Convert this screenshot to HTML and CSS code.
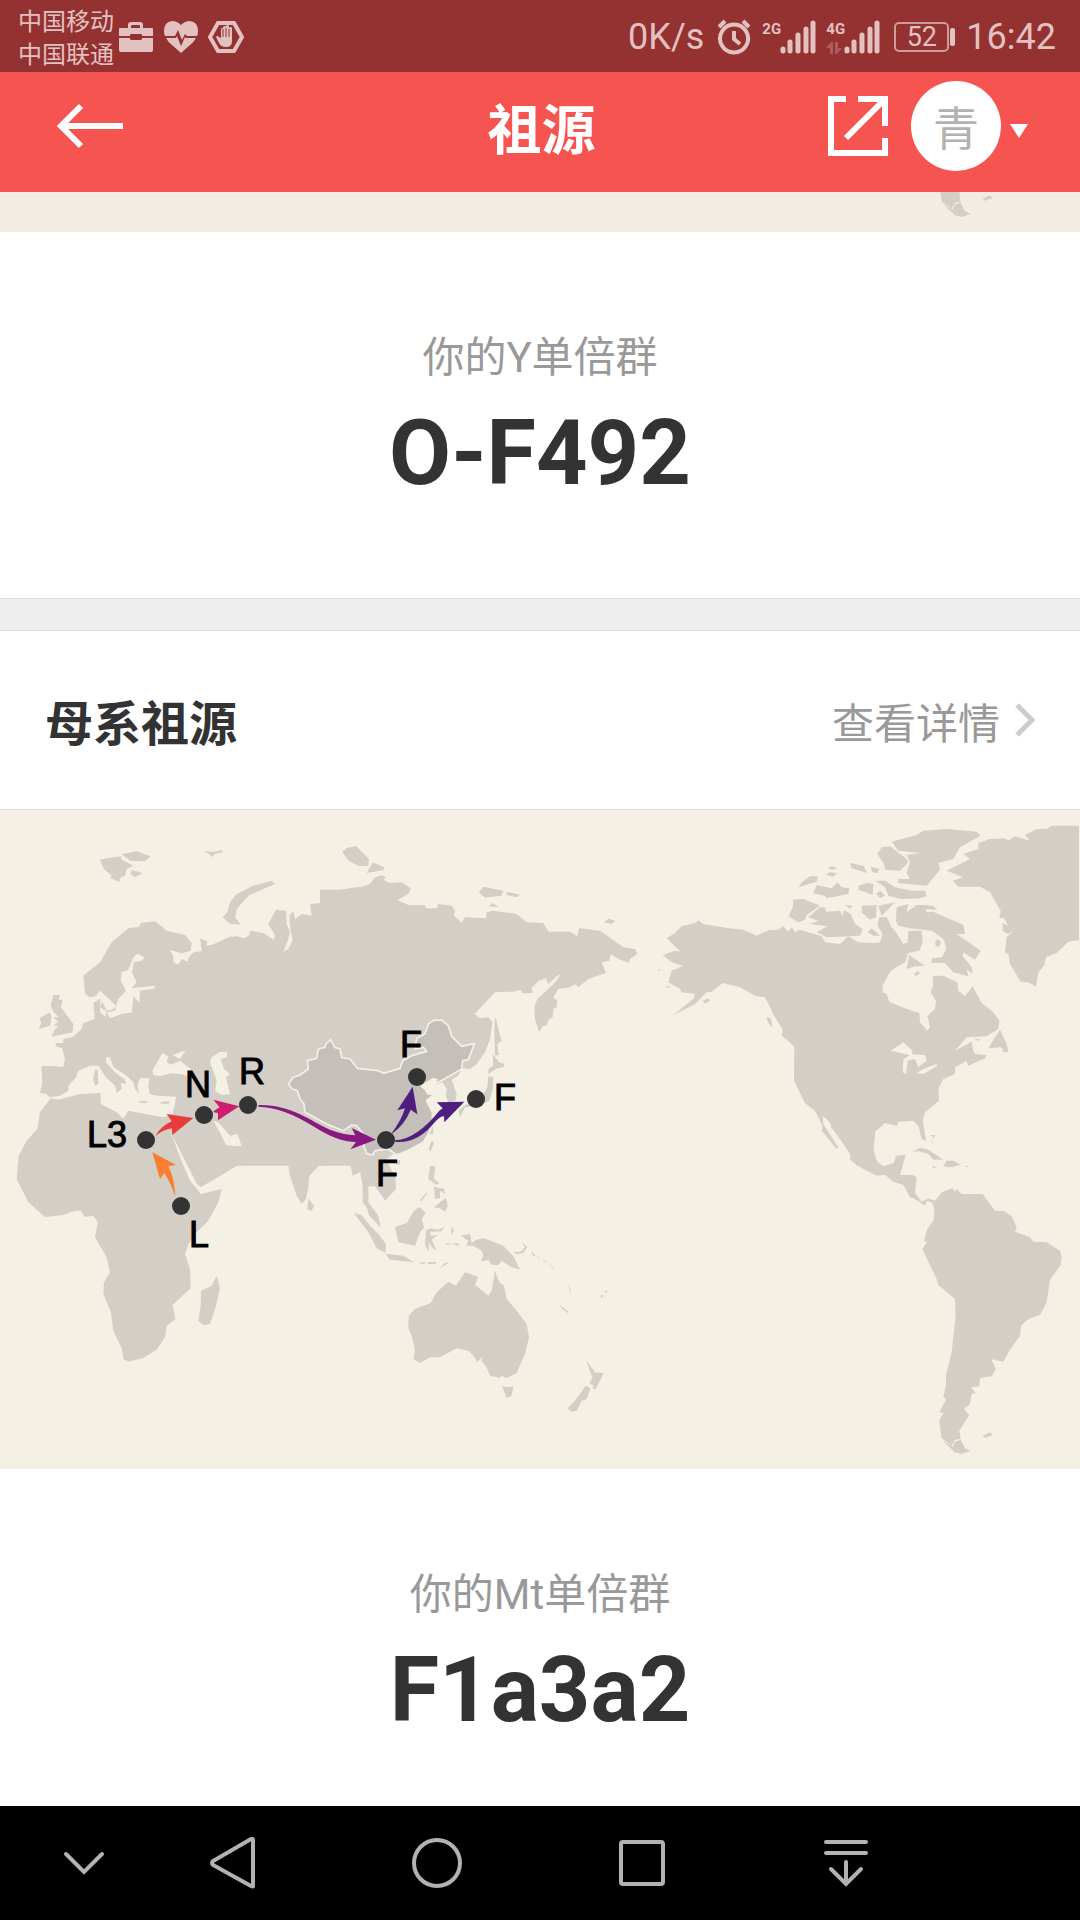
FILE: index.html
```html
<!DOCTYPE html>
<html lang="zh-CN">
<head>
  <meta charset="UTF-8" />
  <meta name="viewport" content="width=device-width, initial-scale=1.0">
  <title>祖源</title>
  <link rel="stylesheet" href="styles.css">
</head>
<body>

  <!-- Status bar -->
  <div class="status-bar">
    <div class="carriers">
      <div>中国移动</div>
      <div>中国联通</div>
    </div>
    <div class="status-icons">
      <svg width="36" height="34" viewBox="0 0 36 34">
        <path d="M10 7V4q0-3 3-3h9q3 0 3 3v3h9q1 0 1 1v7H24v-1q0-1-1-1H13q-1 0-1 1v1H1V8q0-1 1-1zm3 0h9V5q0-1-1-1h-7q-1 0-1 1z" fill-rule="evenodd"/>
        <path d="M1 17h11q0 2 1 2h10q1 0 1-2h11v12q0 2-2 2H3q-2 0-2-2z"/>
      </svg>
      <svg width="36" height="34" viewBox="0 0 36 34">
        <path d="M18 4Q14 0 9 0 1 1 1 10q0 3 1 5h10l3-6 4 10 3-6 2 2h10q1-2 1-5 0-9-8-10-5 0-9 4z"/>
        <path d="M3 17q2 4 6 7l9 8 9-8q4-3 6-7H23l-1-1-4 9-4-10-1 2z"/>
      </svg>
      <svg width="36" height="34" viewBox="0 0 36 34">
        <path d="M10 2h16l8 14-8 14H10L2 16z" class="line"/>
        <path d="M13 17V8q1-2 2 0V6q2-2 3 0V5q2-2 3 0v2q2-2 3 0v13q0 6-6 6-5 0-7-4l-3-6q1-2 3 0z"/>
        <path d="M15 8v8M18 7v9M21 8v8" class="gap"/>
      </svg>
    </div>
    <div class="status-right">
      <span>0K/s</span>
      <svg class="alarm" width="36" height="36" viewBox="0 0 36 36">
        <path d="M18 5.500a14 14 0 1 0 .1 0zM18 12v8l6 5M3 8l6-6M33 8l-6-6" class="line"/>
      </svg>
      <div class="signal">
        <b>2G</b>
        <svg width="36" height="34" viewBox="0 0 36 34"><path d="M3 31V29M10 31V22M18 31V15M26 31V9M33 31V3" class="bar"/></svg>
      </div>
      <div class="signal">
        <b>4G</b>
        <svg width="36" height="34" viewBox="0 0 36 34"><path d="M3 31V29M10 31V22M18 31V15M26 31V9M33 31V3" class="bar"/></svg>
        <svg class="traffic" width="16" height="12" viewBox="0 0 16 12"><path d="M0 6l5-6h2v12H4V6zM9 0h3v6h4l-5 6H9z"/></svg>
      </div>
      <div class="battery">52</div>
      <span>16:42</span>
    </div>
  </div>

  <!-- Header -->
  <header class="header">
    <button class="back-btn" aria-label="返回">
      <svg width="70" height="50" viewBox="0 0 70 50"><path d="M68 25H6M26 5L6 25l20 20"/></svg>
    </button>
    <h1>祖源</h1>
    <div class="header-actions">
      <button class="share-btn" aria-label="分享">
        <svg width="60" height="60" viewBox="0 0 60 60"><path d="M18 3H3v54h54V42M30 3h27v27M56 4L18 42"/></svg>
      </button>
      <button class="profile-btn">
        <span class="avatar">青</span>
        <svg width="18" height="14" viewBox="0 0 18 14"><path d="M0 0h18L9 14z"/></svg>
      </button>
    </div>
  </header>

  <main>
    <!-- Bottom edge of the paternal map -->
    <div class="map-strip">
      <svg viewBox="0 619 1080 40"><use href="#world"/></svg>
    </div>

    <section class="result">
      <p>你的Y单倍群</p>
      <strong>O-F492</strong>
    </section>

    <div class="divider"></div>

    <section>
      <div class="section-title">
        <h2>母系祖源</h2>
        <a href="#detail">查看详情
          <svg width="20" height="34" viewBox="0 0 20 34"><path d="M2 2l15 15L2 32"/></svg>
        </a>
      </div>

      <div class="map">
        <svg viewBox="0 0 1080 659">
          <g id="world">
            <!-- Europe, west Asia -->
            <g transform="translate(0 -11) scale(.33333)" class="land">
              <path d="M150 895L138 884 120 882 127 850 124 805 130 800 190 803 195 780 186 748 166 742 168 732 190 732 190 720 218 714 245 690 250 672 284 660 280 612 302 598 320 635 335 632 350 622 300 575 288 590 270 595 255 584 250 530 300 490 335 430 385 388 415 384 425 371 465 367 485 382 500 395 555 408 575 432 572 455 545 463 508 452 520 470 520 490 535 497 545 480 562 488 567 475 580 460 605 457 600 418 622 427 620 440 640 436 690 413 710 412 735 418 748 408 750 395 790 402 822 423 825 408 805 375 828 332 858 335 860 375 870 400 862 430 850 458 865 450 878 425 870 380 868 350 880 335 885 360 905 345 935 350 930 315 985 310 980 295 1020 272 1080 263V1100H540L512 1000 528 893 470 890 450 885 445 860 449 838 420 838 412 860 418 884 405 870 400 850 380 830 340 805 330 775 318 775 318 790 345 820 375 842 378 855 362 852 365 870 350 882 345 860 318 835 295 800 270 800 235 815 228 835 205 860 205 875 180 890Z"/>
              <path d="M300 182L330 176 362 172 365 182 400 200 380 210 375 230 362 235 358 249 332 238 335 230 312 210ZM365 166L410 157 452 172 435 187 390 185ZM395 213L428 222 405 235 392 226ZM610 157L645 158 667 153 667 160 645 165 635 174 625 163ZM668 355L682 340 690 310 710 285 760 260 815 246 825 255 790 270 745 290 710 330 705 355 722 377 690 374ZM1028 160L1040 148 1068 142 1106 180 1105 200 1075 200 1045 184ZM160 588L180 588 176 602 188 602 182 624 205 655 220 675 218 700 155 713 162 695 175 682 160 680 175 668 160 655 176 654 160 638 152 620ZM150 640L155 655 150 680 116 690 124 672 118 658ZM285 812L293 812 295 855 285 860 280 840Z"/>
              <g class="sea">
                <path d="M412 464L433 475 425 485 402 490 396 520 410 550 395 568 463 560 466 568 420 575 418 612 400 592 396 640 365 645 330 658 320 640 345 635 355 600 378 575 362 545 365 520 385 512 400 475ZM487 762L505 772 500 790 512 797 540 785 575 812 570 835 545 825 512 823 480 832 460 828 457 815ZM518 768L557 754 540 780ZM635 775L660 758 682 760 680 775 662 780 672 810 690 825 678 835 690 885 665 888 645 875 650 845 630 790ZM302 580L308 605 300 625 318 635 318 655 300 640Z"/>
              </g>
              <path d="M415 905L442 907 440 912 420 911ZM480 910L510 906 506 914 484 914Z"/>
            </g>

            <!-- Africa, Arabia, India -->
            <g transform="translate(0 249) scale(.33333)" class="land">
              <path d="M152 118L175 122 240 105 302 102 302 135 350 160 370 180 385 155 490 175 520 165 512 210 540 260 555 310 597 380 602 405 665 390 655 430 625 485 590 520 565 555 555 585 570 630 572 687 518 738 526 780 500 800 495 835 470 872 430 897 385 908 370 900 366 870 340 815 333 760 310 705 312 670 330 640 320 595 285 535 293 490 280 470 255 474 243 455 225 455 190 468 135 474 85 430 50 360 56 290 80 245 112 210 120 160ZM650 650L660 688 648 740 630 795 612 798 595 785 602 740 603 695 635 680ZM925 418L942 440 935 455 922 452Z"/>
              <path d="M520 150H1080V340L1060 348 1045 300 1025 272 1010 285 985 292 928 350 925 385 918 420 905 435 890 410 870 350 860 290 845 292 805 243 720 243 720 262 745 272 720 315 670 345 602 385 590 370 565 325 545 270 520 220Z"/>
              <path class="sea" d="M640 185L655 190 690 230 712 225 718 240 725 262 700 260 678 258 665 230Z"/>
              <path class="sea" d="M510 212L520 235 540 275 565 325 590 375 604 387 655 376 670 385 604 405 570 365 540 295Z"/>
            </g>

            <!-- Siberia, Japan -->
            <g transform="translate(340 -11) scale(.33333)" class="land">
              <path d="M0 272L60 265 90 255 105 235 125 229 138 235 130 242 150 252 185 250 212 268 205 285 172 303 205 318 255 318 258 328 290 328 295 315 335 320 345 335 342 350 365 372 375 355 438 358 440 340 460 335 530 345 560 370 610 372 625 398 690 398 712 412 718 388 780 395 850 445 885 450 892 465 870 480 868 492 840 482 812 465 808 485 785 490 798 522 745 540 715 565 705 556 690 565 655 570 640 595 652 605 650 625 640 630 638 655 625 662 620 680 610 680 597 698 585 660 583 625 592 600 625 570 650 545 662 525 650 532 625 555 618 538 595 545 575 568 578 582 548 583 542 572 520 578 465 580 404 645 420 658 445 655 457 670 450 720 435 760 410 795 390 810 365 808 355 830 335 842 350 885 346 905 325 912 318 890 320 870 308 850 285 858 285 840 245 862 270 885 285 885 260 905 275 935 280 1005H-60V272Z"/>
              <path d="M8 160L20 148 48 142 86 180 85 200 55 200 25 184ZM80 222L98 190 133 205 130 214ZM417 280L430 263 490 275 485 290 435 296ZM500 278L540 287 530 295 500 288ZM445 322L458 312 476 325ZM792 370L805 359 825 365 815 374ZM466 652L475 690 485 725 472 735 476 768 465 770 463 690ZM458 765L480 792 494 795 490 805 470 808 445 825 445 810 460 800ZM445 832L460 835 458 870 448 905 420 920 375 925 360 955 355 935 380 915 425 895 442 865Z"/>
            </g>

            <!-- South-east Asia, Australia -->
            <g transform="translate(340 289) scale(.33333)" class="land">
              <path d="M0 150L12 160 30 190 38 230 60 218 68 260 68 310 80 325 88 350 122 385 115 350 85 310 85 262 105 262 125 290 135 305 168 270 166 235 150 205 140 180 160 165 180 168 180 90H0ZM170 185L182 182 178 198 168 195ZM275 125L282 130 272 158 266 150ZM270 200L286 202 282 240 298 252 290 258 265 240ZM260 280L262 285 242 308 240 304ZM282 262L295 268 312 268 315 285 300 275 300 298 285 300ZM282 325L300 310 318 297 323 320 315 338 300 328ZM240 325L257 342 245 360 252 385 240 400 225 440 175 430 165 385 200 372 222 335ZM42 342L65 348 90 380 115 405 138 435 136 462 110 448 85 400ZM135 464L190 470 222 490 150 482ZM237 490H255V494H240ZM262 490L290 488 288 494 265 496ZM296 510L315 492 328 490 300 508ZM258 395L270 388 295 392 312 383 305 397 270 398 272 410 293 408 275 422 290 455 275 445 268 430 264 458 255 435ZM335 380L342 395 334 408ZM318 434H330V438H318ZM335 433L360 434 355 440 340 436ZM362 410L390 405 395 432 410 422 430 417 490 440 520 472 540 512 515 505 485 485 475 498 455 497 445 483 422 487 430 470 425 455 400 440 380 440 385 425ZM520 458L540 460 555 445 545 428 562 445 550 462 530 466ZM573 455L588 472 580 472ZM590 470L600 476 594 476ZM605 480L620 488 616 490ZM625 488L645 515 640 512ZM684 558L693 577 688 575ZM660 618L686 638 684 643 665 628ZM780 590L790 588 786 598ZM792 578L805 573 798 582Z"/>
              <path d="M465 515L478 550 492 560 500 600 530 635 560 675 567 715 555 765 530 822 500 838 485 830 480 837 450 830 440 805 425 785 428 772 412 790 400 770 385 755 350 748 300 775 270 775 240 792 220 780 225 755 215 710 205 688 206 650 225 630 272 612 290 580 325 548 348 560 375 520 415 533 405 558 445 590 455 575ZM486 860L500 865 520 862 515 890 500 898ZM738 783L765 820 791 822 780 845 765 872 757 865 762 858 748 855 757 835ZM737 860L752 868 740 900 725 905 710 935 695 938 683 928 705 905Z"/>
            </g>

            <!-- China -->
            <g transform="translate(340 -11) scale(.33333)" class="china">
              <path d="M-143 870L-155 855 -140 835 -120 828 -95 810 -98 785 -70 778 -65 750 -45 745 -42 735 -28 722 -16 745 0 750 5 775 30 780 52 808 115 815 130 823 180 808 188 785 215 770 260 757 250 745 225 750 230 718 255 705 265 675 280 664 305 663 325 680 335 712 365 742 404 733 385 782 368 785 365 810 330 830 280 858 290 842 278 840 245 862 255 870 265 885 285 885 260 905 278 940 277 975 268 1000 250 1030 210 1052 178 1066 168 1066 145 1050 105 1055 98 1068 80 1064 68 1030 75 1010 50 980 35 978 10 995-40 975-105 940-108 915-120 900-128 875Z"/>
              <path class="coast" d="M282 858L290 842 278 840 245 862 255 870 265 885 285 885 260 905 278 940 277 975 268 1000 250 1030 210 1052 178 1066"/>
            </g>

            <!-- North America, Greenland -->
            <g transform="translate(640 -11) scale(.33333)" class="land">
              <path d="M80 418L105 402 125 382 165 372 175 364 190 375 260 387 310 392 350 410 390 392 415 392 430 382 445 398 455 385 465 400 480 392 545 412 555 430 600 435 625 412 655 430 700 432 720 430 728 405 712 380 718 355 740 355 755 385 768 400 790 435 803 430 805 395 845 395 848 430 838 455 805 462 795 490 752 515 728 560 728 580 740 585 748 608 800 630 838 642 840 670 862 695 870 685 862 650 885 630 888 605 872 580 880 560 878 530 910 530 952 550 955 575 975 592 998 562 1025 612 1060 640 1078 665 1075 690 1040 712 980 715 945 755 995 728 1000 755 1005 765 1040 768 1035 778 985 800 980 785 945 805 945 825 910 840 895 870 897 905 855 940 848 965 858 1025 845 1020 835 980 820 965 775 968 770 980 735 972 705 998 700 1060 702 1100H650L630 1065 565 965 548 950 550 975 595 1045 590 1050 545 995 548 980 525 935 495 912 462 845 463 740 425 710 428 690 405 655 375 595 345 590 300 565 248 552 215 578 200 580 165 615 97 650 160 600 165 585 125 580 118 568 85 550 95 515 130 500 95 490 68 468 105 455 122 458Z"/>
              <path d="M458 302L490 300 540 320 500 348 495 362 475 370 446 352 460 320ZM475 265L485 250 510 232 533 232 530 248ZM565 207L575 202 592 208 575 213ZM558 228L568 220 590 222 580 233ZM520 283L530 258 575 268 592 250 605 265 628 268 625 285 560 298 555 290ZM655 260L680 252 700 255 698 288 655 272ZM630 192L670 200 682 222 635 208ZM692 203L718 210 712 222 697 220ZM706 245L735 245 765 265 815 275 855 275 860 292 840 298 785 300 745 290 735 265ZM708 285L720 275 735 290 720 297ZM505 355L540 325 555 325 558 338 600 335 608 352 612 332 632 345 645 375 668 390 660 410 560 415 530 400 562 382 510 375 535 365ZM665 320L710 318 708 355 690 362 665 340ZM715 320L765 310 725 350ZM615 318L637 320 630 330ZM683 400L695 388 720 410 700 410ZM768 365L770 325 805 315 800 340 830 318 850 318 860 340 880 338 970 378 975 405 950 405 1022 455 1005 482 970 460 968 472 995 505 998 525 980 510 985 532 940 520 915 492 875 492 875 478 905 475 920 450 910 420 875 395 810 388 775 380ZM850 318L880 320 892 333 855 330ZM885 430L892 421 903 428 900 440 888 443ZM808 468L855 500 825 502 800 510ZM822 525L835 516 840 522 828 532ZM755 128L830 108 850 95 920 90 1010 98 1022 110 960 145 940 180 895 192 900 212 860 260 775 252 775 240 810 240 800 222 810 190 800 168 840 162 775 155ZM712 165L725 145 750 142 800 180 805 190 780 215 735 212 732 195ZM380 655L392 658 398 685 385 672ZM425 707L460 722 477 750 460 740ZM188 605L205 598 210 605 195 614ZM74 563L85 560 92 567ZM55 510L62 512 56 516ZM1080 692L1100 735 1105 758 1090 760 1085 745 1045 748 1062 720ZM1000 716L1022 722 1015 726ZM870 1008L885 1008 884 1018ZM874 1018L880 1040 875 1030Z"/>
              <path d="M920 215L990 180 970 165 1015 150 1015 132 1050 120 1095 118 1105 125 1125 112 1170 125 1155 108 1190 90 1220 90 1235 80 1317 80V423L1285 428 1250 462 1218 475 1212 500 1195 520 1188 563 1165 550 1142 548 1110 495 1105 465 1095 460 1100 415 1120 395 1105 405 1088 395 1088 372 1105 380 1092 358 1078 358 1082 335 1050 280 1020 263 955 263 938 245 970 235Z"/>
              <path class="sea" d="M752 755L790 730 818 755 815 765 855 768 860 785 835 805 825 780 803 785 798 825 788 820 790 780 810 768ZM830 822L855 808 890 795 890 802 850 825Z"/>
              <path class="line" d="M310 395V560"/>
            </g>

            <!-- Central and South America -->
            <g transform="translate(640 319) scale(.33333)" class="land">
              <path d="M570-10L600 30 632 70 630 92 665 118 712 140 735 137 760 158 790 168 810 205 825 210 855 230 860 215 878 222 883 240 882 272 862 300 852 335 860 340 847 360 890 450 895 468 945 510 947 560 935 670 918 740 918 770 910 802 918 812 898 850 910 852 898 875 905 928 935 950 945 932 962 930 958 905 988 858 972 840 990 825 995 795 1007 792 993 775 1018 772 1020 747 1055 742 1068 720 1053 690 1090 698 1110 662 1140 620 1143 590 1165 570 1200 558 1220 520 1230 452 1262 408 1265 385 1260 365 1220 340 1180 338 1170 325 1125 308 1130 295 1115 262 1090 245 1065 245 1050 225 1028 195 965 195 948 180 945 190 937 178 905 190 885 215 865 208 845 218 825 192 830 145 818 138 780 138 797 78 768 80 762 102 730 112 712 98 700 65 706-10ZM815 70L840 56 865 62 910 92 880 92 865 75 835 66ZM920 95L940 95 962 108 930 115 910 112ZM975 110L988 112 978 115ZM875 110L892 114 880 117ZM908 935L938 953 945 938 962 932 975 958 992 965 965 975 945 970ZM1028 920L1050 910 1058 918 1035 926Z"/>
            </g>
          </g>

          <!-- Migration routes -->
          <g transform="translate(0 249) scale(.33333)">
            <path class="route-l" d="M457 280L528 318 505 322Q522 352 526 412 512 372 493 342L480 360Z"/>
            <path class="route-l3" d="M466 231Q482 202 515 187L500 165 580 177 517 228 516 208Q490 212 466 231Z"/>
            <path class="route-n" d="M640 122L718 142 654 184 654 162 640 160 642 155 659 145Z"/>
            <path class="route-r" d="M775 138C870 135 930 185 990 212Q1030 227 1066 229L1055 207 1128 242 1051 271 1068 250Q1010 248 940 202 850 145 775 143Z"/>
          </g>
          <g transform="translate(340 289) scale(.33333)" class="route-f">
            <path d="M155 103Q185 62 195 28L172 34 218-37 232 46 212 32Q195 75 158 103ZM165 124Q230 120 298 35L308 28 290 10 373 8 313 70 312 52Q300 50 275 80 225 135 165 128Z"/>
          </g>
          <g class="nodes">
            <circle cx="181" cy="396" r="9"/><text x="189" y="437">L</text>
            <circle cx="146" cy="330" r="9"/><text x="87" y="337">L3</text>
            <circle cx="204" cy="305" r="9"/><text x="185" y="287">N</text>
            <circle cx="248" cy="295" r="9"/><text x="239" y="274">R</text>
            <circle cx="386" cy="330" r="9"/><text x="376" y="376">F</text>
            <circle cx="417" cy="267" r="9"/><text x="400" y="247">F</text>
            <circle cx="476" cy="289" r="9"/><text x="494" y="300">F</text>
          </g>
        </svg>
      </div>

      <div class="result">
        <p>你的Mt单倍群</p>
        <strong>F1a3a2</strong>
      </div>
    </section>
  </main>

  <!-- System navigation -->
  <nav class="nav-bar">
    <button aria-label="收起"><svg width="52" height="52" viewBox="0 0 52 52"><path d="M8 17l18 18 18-18"/></svg></button>
    <button aria-label="返回"><svg width="52" height="52" viewBox="0 0 52 52"><path d="M46 3v46q0 1-2 0L6 28q-2-2 0-4L44 2q2-1 2 1z"/></svg></button>
    <button aria-label="主页"><svg width="52" height="52" viewBox="0 0 52 52"><circle cx="26" cy="26" r="23"/></svg></button>
    <button aria-label="最近任务"><svg width="52" height="52" viewBox="0 0 52 52"><rect x="5" y="5" width="42" height="42" rx="2"/></svg></button>
    <button aria-label="通知"><svg width="52" height="52" viewBox="0 0 52 52"><path d="M6 5h40M6 16h40M26 25v21M11 32l15 15 15-15"/></svg></button>
  </nav>

</body>
</html>
```
FILE: styles.css
```css
* {
  box-sizing: border-box;
}

body {
  margin: 0;
  height: 100vh;
  display: flex;
  flex-direction: column;
  overflow: hidden;
  background: #fff;
  color: #333;
  font-family: Roboto, "Noto Sans CJK SC", sans-serif;
}

h1, h2, p {
  margin: 0;
}

svg {
  display: block;
}

button {
  padding: 0;
  border: none;
  background: none;
  font: inherit;
  cursor: pointer;
}

/* Status bar */
.status-bar {
  flex: none;
  display: flex;
  align-items: center;
  height: 72px;
  padding: 0 24px 0 18px;
  background: #943131;
  color: #e4c1c1;
}

.status-bar svg {
  fill: #e4c1c1;
}

.status-bar .line {
  fill: none;
  stroke: #e4c1c1;
  stroke-width: 4;
}

.status-bar .gap {
  fill: none;
  stroke: #943131;
  stroke-width: 1;
}

.status-bar .bar {
  stroke: #e4c1c1;
  stroke-width: 5;
  stroke-linecap: round;
}

.carriers {
  padding-top: 5px;
  font-size: 24px;
  line-height: 33px;
}

.status-icons {
  display: flex;
  gap: 9px;
  margin: 4px 0 0 4px;
}

.status-right {
  display: flex;
  align-items: center;
  margin-left: auto;
  padding-top: 2px;
  font-size: 36px;
}

.status-right .alarm {
  margin: 0 10px 0 12px;
}

.signal {
  position: relative;
  display: flex;
  align-items: flex-start;
  margin-right: 10px;
}

.signal b {
  width: 18px;
  font-size: 15px;
  line-height: 18px;
}

.signal .traffic {
  position: absolute;
  left: 0;
  bottom: 0;
  opacity: 0.3;
}

.battery {
  position: relative;
  width: 55px;
  height: 30px;
  margin: 0 17px 0 4px;
  border: 2px solid #cf9c9c;
  border-radius: 5px;
  font-size: 27px;
  line-height: 27px;
  text-align: center;
}

.battery::after {
  content: "";
  position: absolute;
  top: 4px;
  right: -8px;
  width: 5px;
  height: 18px;
  border-radius: 2px;
  background: #e4c1c1;
}

/* Header */
.header {
  flex: none;
  display: grid;
  grid-template-columns: 1fr auto 1fr;
  align-items: center;
  height: 120px;
  padding: 0 52px 12px 55px;
  background: #f65451;
  color: #fff;
}

.header h1 {
  font-size: 54px;
  line-height: 72px;
  padding-top: 12px;
}

.header svg {
  fill: none;
  stroke: #fff;
  stroke-width: 6;
}

.back-btn {
  justify-self: start;
}

.header-actions {
  display: flex;
  align-items: center;
  justify-self: end;
  gap: 23px;
}

.profile-btn {
  display: flex;
  align-items: center;
  gap: 9px;
}

.profile-btn svg {
  margin-top: 10px;
  fill: #fff;
  stroke: none;
}

.avatar {
  width: 90px;
  height: 90px;
  padding-top: 3px;
  border-radius: 50%;
  background: #fff;
  color: #b2b2b2;
  font-size: 46px;
  line-height: 90px;
}

/* Content */
main {
  flex: 1;
  min-height: 0;
  overflow: hidden;
}

.map-strip {
  background: #f2ede2;
}

.result {
  padding: 96px 0 94px;
  text-align: center;
}

.result p {
  color: #999;
  font-size: 42px;
  line-height: 60px;
}

.result strong {
  display: block;
  margin-top: 16px;
  font-size: 90px;
  line-height: 100px;
}

.divider {
  height: 33px;
  border: solid #ddd;
  border-width: 1px 0;
  background: #eee;
}

.section-title {
  display: flex;
  align-items: center;
  justify-content: space-between;
  height: 179px;
  padding: 0 45px;
  border-bottom: 1px solid #ddd;
}

.section-title h2 {
  font-size: 48px;
}

.section-title a {
  display: flex;
  align-items: center;
  gap: 15px;
  color: #999;
  font-size: 42px;
  text-decoration: none;
}

.section-title svg {
  fill: none;
  stroke: #ccc;
  stroke-width: 5;
}

/* Map */
.map {
  background: #f4f0e4;
}

.land {
  fill: #d3cec6;
}

.land .sea {
  fill: #f4f0e4;
}

.land .line {
  stroke: #d8d3ca;
  stroke-width: 3;
}

.china {
  fill: #c4bfb8;
  stroke: #f4f0e9;
  stroke-width: 5;
  stroke-linejoin: round;
}

.china .coast {
  fill: none;
  stroke: #f4f0e4;
}

.route-l { fill: #fb7d2e; }
.route-l3 { fill: #e83c3c; }
.route-n { fill: #cf1e6e; }
.route-r { fill: #871a80; }
.route-f { fill: #4f1f7f; }

.nodes {
  fill: #333;
}

.nodes text {
  fill: #000;
  stroke: #000;
  stroke-width: 1;
  font: 36px "Liberation Sans", sans-serif;
}

/* System navigation */
.nav-bar {
  flex: none;
  display: flex;
  height: 114px;
  padding: 0 132px 0 37px;
  background: #000;
}

.nav-bar button {
  flex: 1;
  display: flex;
  align-items: center;
  justify-content: center;
}

.nav-bar button:first-child {
  flex: 0 0 94px;
}

.nav-bar svg {
  fill: none;
  stroke: #b2b2b2;
  stroke-width: 4;
  stroke-linecap: round;
}
```
